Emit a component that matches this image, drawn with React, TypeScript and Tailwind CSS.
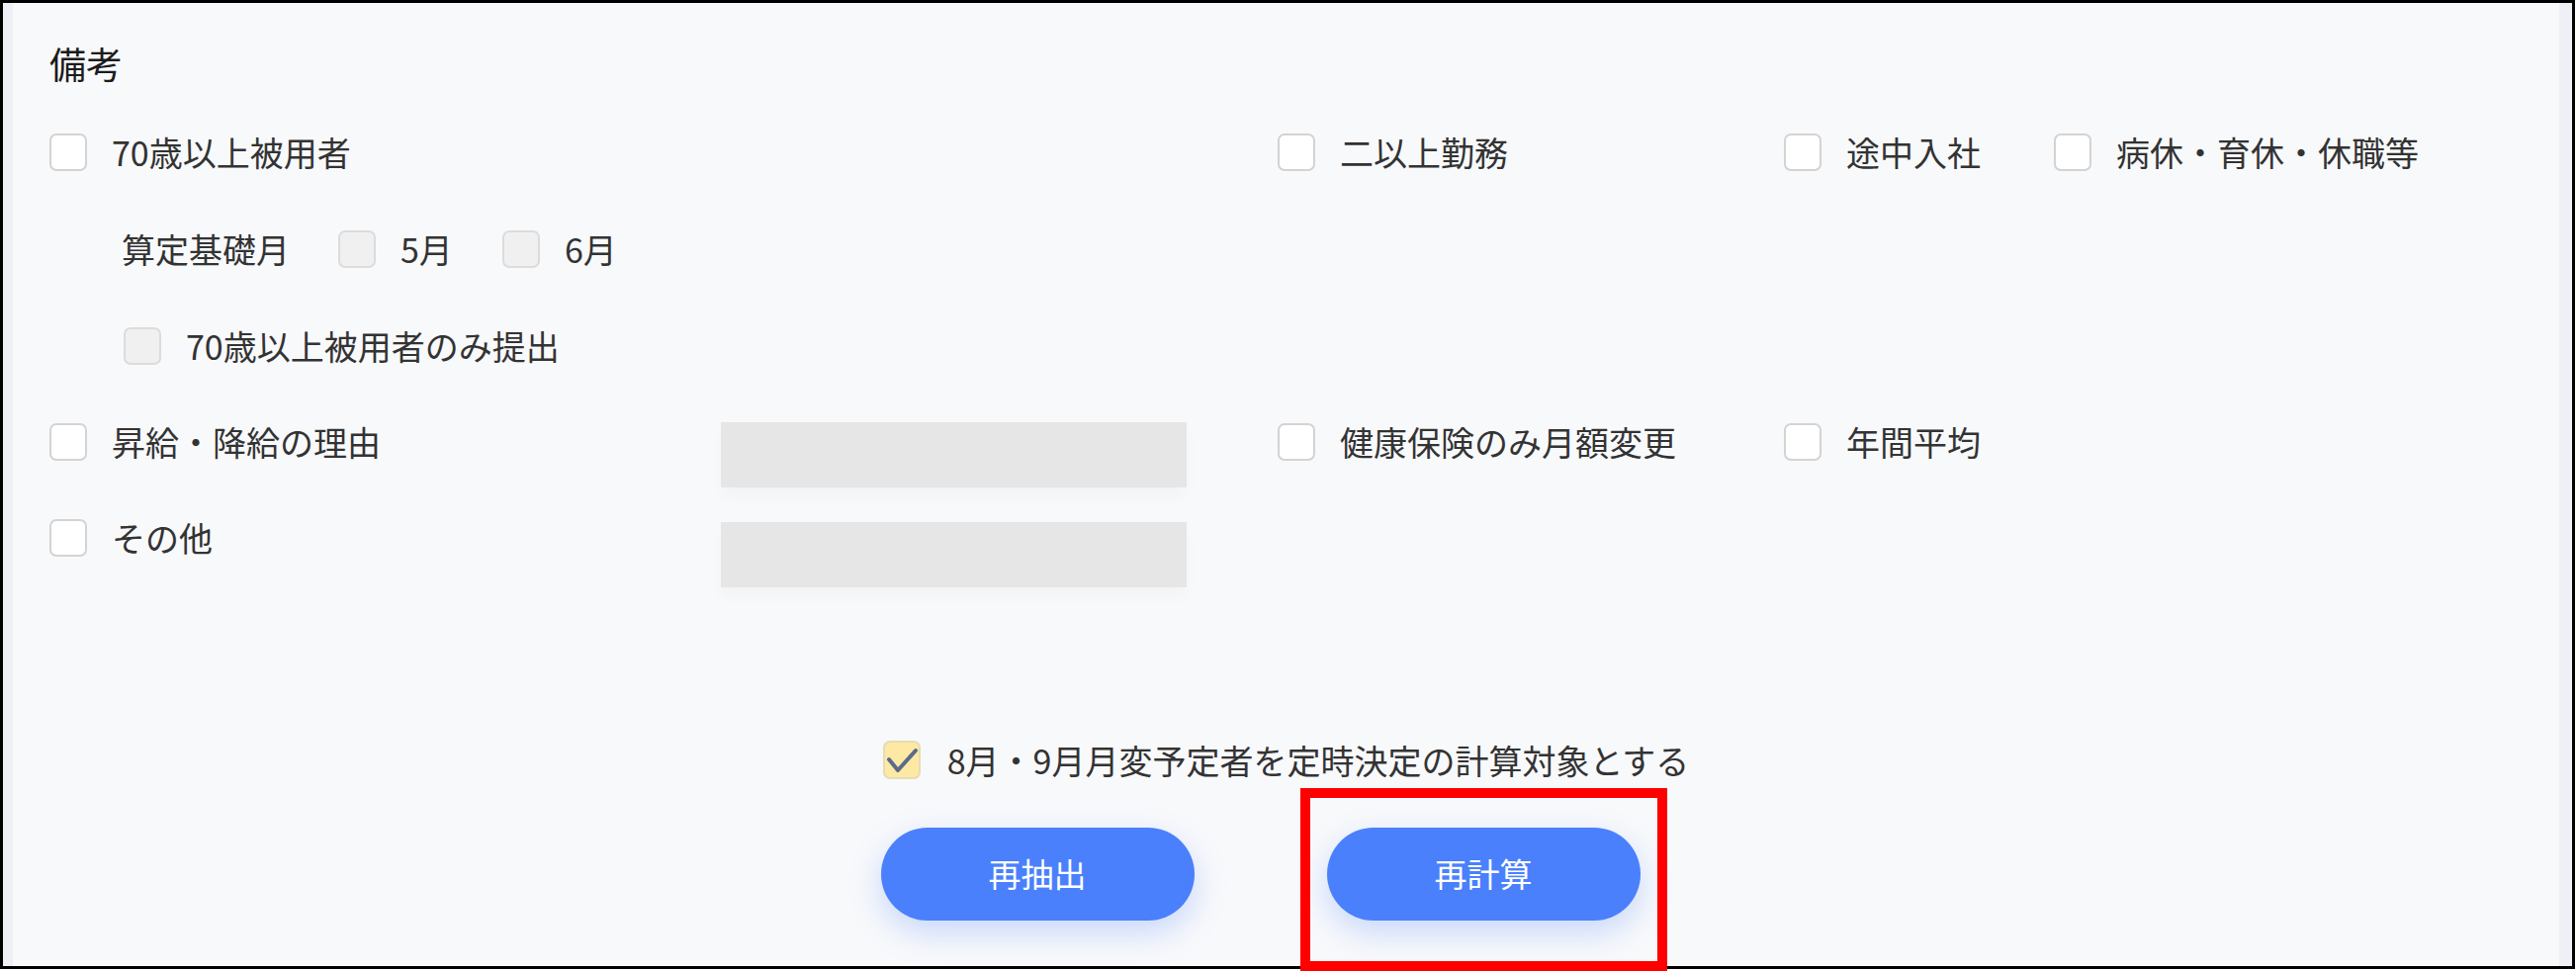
import React from "react";

type Variant = "normal" | "disabled" | "checked";

function Box({ variant = "normal" }: { variant?: Variant }) {
  if (variant === "checked") {
    return (
      <div className="w-[38px] h-[39px] shrink-0 rounded-[7px] border-2 border-[#e6dcb4] bg-[#fde9a3] flex items-center justify-center">
        <svg width="34" height="34" viewBox="0 0 34 34" fill="none">
          <polyline points="4,16 13,27 31,7" stroke="#5c6a8a" strokeWidth="4" strokeLinecap="round" strokeLinejoin="round" />
        </svg>
      </div>
    );
  }
  if (variant === "disabled") {
    return <div className="w-[38px] h-[38px] shrink-0 rounded-[7px] border-2 border-[#dcdcdc] bg-[#f0f0f0]" />;
  }
  return <div className="w-[38px] h-[38px] shrink-0 rounded-[7px] border-2 border-[#d3d3d3] bg-white" />;
}

function Check({ label, variant, className = "" }: { label: string; variant?: Variant; className?: string }) {
  return (
    <div className={"flex items-center h-[38px] gap-[25px] " + className}>
      <Box variant={variant} />
      <span className="whitespace-nowrap leading-none">{label}</span>
    </div>
  );
}

export default function App() {
  return (
    <div className="relative w-[2605px] h-[982px] bg-white" style={{ fontFamily: '"Noto Sans CJK JP", "Noto Sans", sans-serif' }}>
      <div className="w-[2604px] h-[980px] border-[3px] border-black flex">
        <div className="w-[10px] bg-[#eef0f6]" />
        <div className="flex-1 bg-[#f8f9fb] flex flex-col pl-[37px] text-[34px] text-[#333333]">
          <div className="pt-[41px] h-[81px] text-[37px] leading-[40px] text-[#1c1c1c]">備考</div>

          {/* Row 1 */}
          <div className="flex items-center mt-[51px] h-[38px]">
            <Check label="70歳以上被用者" className="w-[1242px]" />
            <Check label="二以上勤務" className="w-[512px]" />
            <Check label="途中入社" className="w-[273px]" />
            <Check label="病休・育休・休職等" />
          </div>

          {/* Row 2 */}
          <div className="flex items-center mt-[60px] h-[38px] pl-[73px]">
            <span className="leading-none">算定基礎月</span>
            <Check label="5月" variant="disabled" className="ml-[49px]" />
            <Check label="6月" variant="disabled" className="ml-[50px]" />
          </div>

          {/* Row 3 */}
          <div className="flex items-center mt-[60px] h-[38px] pl-[75px]">
            <Check label="70歳以上被用者のみ提出" variant="disabled" />
          </div>

          {/* Row 4 */}
          <div className="flex items-start mt-[58px]">
            <Check label="昇給・降給の理由" className="w-[679px] mt-[1px]" />
            <div className="w-[471px] h-[66px] bg-[#e6e6e6] shadow-[0_10px_14px_rgba(0,0,0,0.025)]" />
            <Check label="健康保険のみ月額変更" className="w-[512px] mt-[1px] ml-[92px]" />
            <Check label="年間平均" className="mt-[1px]" />
          </div>

          {/* Row 5 */}
          <div className="flex items-start mt-[32px]">
            <Check label="その他" className="w-[679px]" />
            <div className="w-[471px] h-[66px] mt-[3px] bg-[#e6e6e6] shadow-[0_10px_14px_rgba(0,0,0,0.025)]" />
          </div>

          {/* Bottom check */}
          <div className="flex justify-center mt-[155px] pr-[37px]">
            <div className="flex items-center h-[39px] gap-[27px]">
              <Box variant="checked" />
              <span className="whitespace-nowrap leading-none">8月・9月月変予定者を定時決定の計算対象とする</span>
            </div>
          </div>

          {/* Buttons */}
          <div className="flex justify-center gap-[134px] mt-[49px] pr-[89px]">
            <button className="w-[317px] h-[94px] rounded-full bg-[#4a80fc] text-white text-[33px] shadow-[0_12px_32px_rgba(74,128,252,0.28)]">
              再抽出
            </button>
            <button className="w-[317px] h-[94px] rounded-full bg-[#4a80fc] text-white text-[33px] shadow-[0_12px_32px_rgba(74,128,252,0.28)]">
              再計算
            </button>
          </div>
        </div>
        <div className="w-[13px] bg-[#eff0f6]" />
      </div>
      <div className="absolute left-[1315px] top-[797px] w-[371px] h-[185px] border-[10px] border-[#ff0000]" />
    </div>
  );
}
